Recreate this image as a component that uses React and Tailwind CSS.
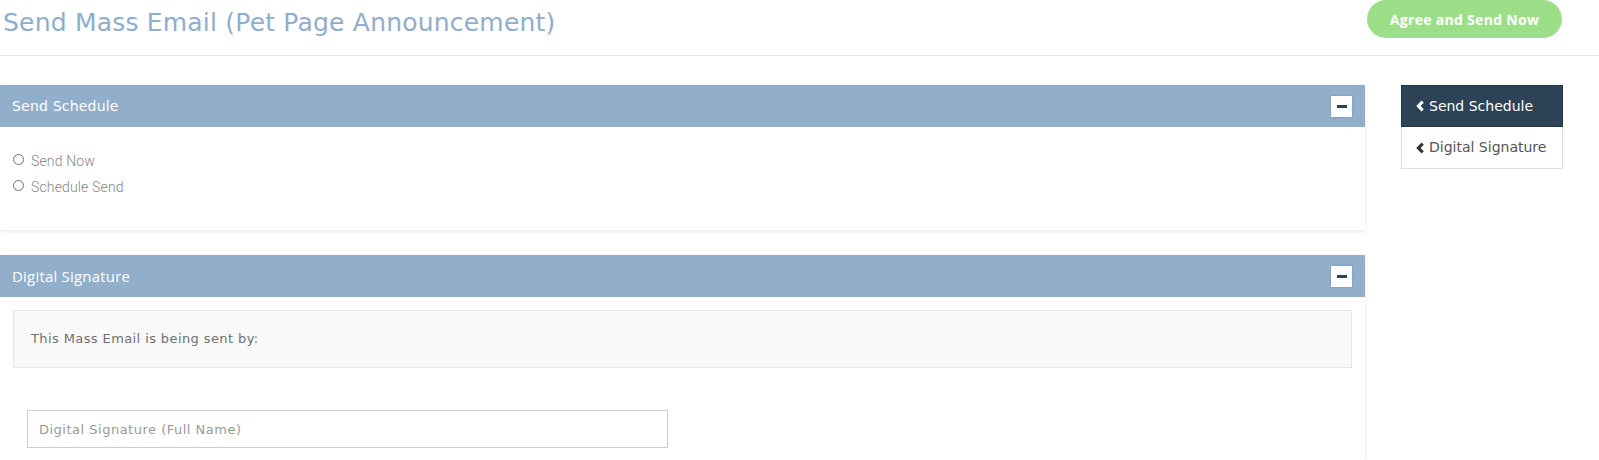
function Chevron({ className }) {
  return (
    <svg viewBox="0 0 10 12" className={className} aria-hidden="true">
      <path d="M6.6 0.6 L8.8 2.7 L5.6 6 L8.8 9.3 L6.6 11.4 L1.2 6 Z" fill="currentColor" />
    </svg>
  );
}

function PanelHeader({ title, titleClass }) {
  return (
    <div className="flex h-[42px] items-center justify-between bg-[#91aecb] pl-3 pr-[13px]">
      <span className={titleClass}>{title}</span>
      <button className="flex h-[21px] w-[21px] items-center justify-center bg-white shadow-[0_0_2px_rgba(0,0,0,0.2)]">
        <span className="block h-[3px] w-[10px] bg-[#2c4257]" />
      </button>
    </div>
  );
}

function Radio({ label }) {
  return (
    <label className="flex h-[26px] items-center gap-[7px] text-[14px] font-light tracking-[0.15px] text-[#858585] [font-family:Roboto,sans-serif]">
      <span className="mt-[-3px] block h-[11px] w-[11px] rounded-full border border-[#6f6f6f]" />
      {label}
    </label>
  );
}

export default function App() {
  return (
    <div className="min-h-[460px] w-[1599px] bg-white [font-family:'DejaVu_Sans',sans-serif]">
      <div className="flex h-[56px] items-start justify-between border-b border-[#e5e5e5] pl-[3px] pr-[37px]">
        <h1 className="mt-[4px] text-[25px] tracking-[0.2px] text-[#8fadcc]">
          Send Mass Email (Pet Page Announcement)
        </h1>
        <button className="h-[38px] w-[195px] rounded-full bg-[#9ddf88] text-[14px] font-bold tracking-[0.3px] text-white [font-family:'Open_Sans',sans-serif]">
          Agree and Send Now
        </button>
      </div>

      <div className="mt-[29px] flex items-start gap-[36px]">
        <div className="flex w-[1365px] flex-col gap-[25px]">
          <section className="bg-white shadow-[0_1px_4px_rgba(0,0,0,0.12)]">
            <PanelHeader title="Send Schedule" titleClass="text-[14px] tracking-[0.2px] text-white" />
            <div className="h-[103px] pl-[13px] pt-[21px]">
              <Radio label="Send Now" />
              <Radio label="Schedule Send" />
            </div>
          </section>

          <section className="h-[205px] bg-white shadow-[0_1px_4px_rgba(0,0,0,0.12)]">
            <PanelHeader
              title="Digital Signature"
              titleClass="text-[15px] tracking-[0.2px] text-white [font-family:'Open_Sans',sans-serif]"
            />
            <div className="px-[13px] pt-[13px]">
              <div className="flex h-[58px] items-center border border-[#e6e6e6] bg-[#f9f9f9] pl-[17px] text-[13px] tracking-[0.4px] text-[#707070]">
                This Mass Email is being sent by:
              </div>
              <div className="pl-[14px] pt-[42px]">
                <input
                  className="h-[38px] w-[641px] border border-[#cccccc] px-[11px] text-[13px] tracking-[0.5px] text-[#555] placeholder:text-[#9a9a9a] outline-none"
                  placeholder="Digital Signature (Full Name)"
                />
              </div>
            </div>
          </section>
        </div>

        <nav className="w-[162px]">
          <a className="flex h-[42px] items-center gap-[4px] border border-[#22364a] bg-[#2c4257] pl-[13px] text-[14px] text-white">
            <Chevron className="h-[12px] w-[10px]" />
            Send Schedule
          </a>
          <a className="flex h-[42px] items-center gap-[4px] border border-t-0 border-[#dddddd] bg-white pl-[13px] text-[14px] text-[#555]">
            <Chevron className="h-[12px] w-[10px] text-[#333]" />
            Digital Signature
          </a>
        </nav>
      </div>
    </div>
  );
}
